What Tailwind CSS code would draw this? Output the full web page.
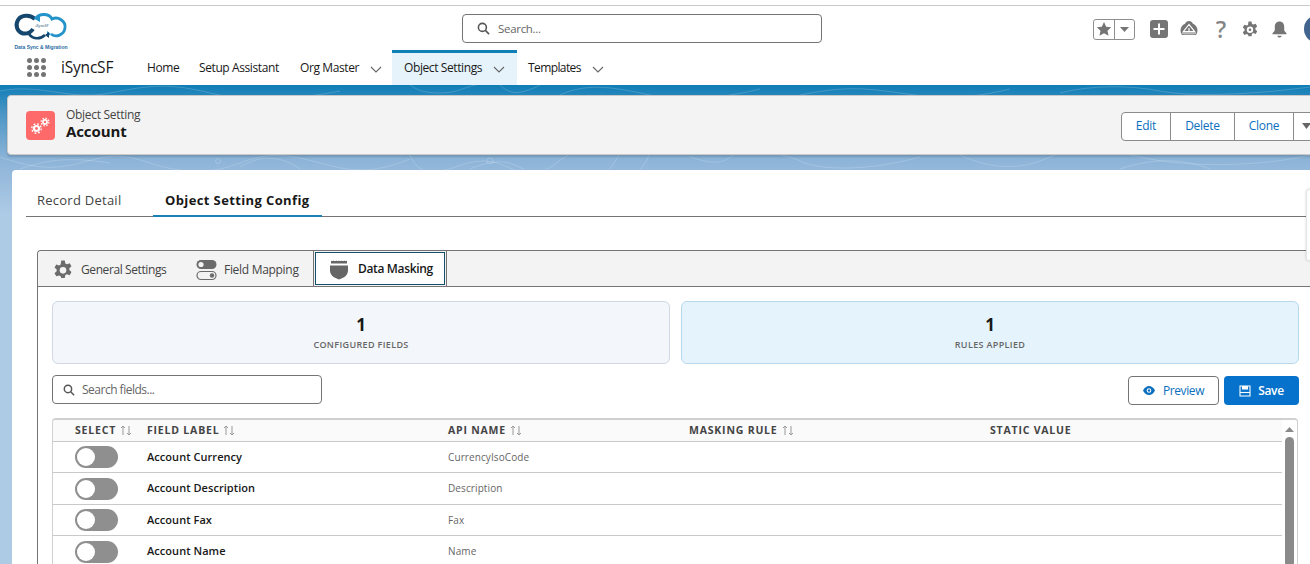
<!DOCTYPE html>
<html lang="en">
<head>
<meta charset="UTF-8">
<title>Object Setting - Account</title>
<script src="https://cdn.jsdelivr.net/npm/@tailwindcss/browser@4"></script>
</head>
<body class="m-0 bg-white">
<div class="relative w-[1310px] h-[564px] overflow-hidden bg-white font-['Open_Sans',sans-serif] text-[#181818]">

  <!-- global header -->
  <div class="h-[6px] border-b border-[#c9c9c9]"></div>
  <div class="flex h-[44px] items-start">
    <div class="w-[462px] pl-[13px] pt-[4px] shrink-0">
      <svg width="58" height="40" viewBox="0 0 58 40">
        <path d="M22 9 C17 4 8 5 5 10 C2 15 4 22 10 23.500 C14 24 18 22 20 19" fill="none" stroke="#14466e" stroke-width="4"/>
        <path d="M16 24 C20 30 28 29 32 25" fill="none" stroke="#14466e" stroke-width="2.600"/>
        <path d="M22 9 C26 3 36 3 39 9 C45 6 53 11 52 18 C51 25 43 28 38 24" fill="none" stroke="#2393c9" stroke-width="2.800"/>
        <path d="M38 24 l-4 -3 l0 6z" fill="#2393c9"/>
        <path d="M32 25 l4 -3 l0 6z" fill="#14466e"/>
        <path d="M22 9 l5 -3 l0 6z" fill="#2393c9"/>
        <text x="29" y="17" font-size="4" font-style="italic" text-anchor="middle" fill="#14466e">iSyncSF</text>
        <text x="28" y="39" font-size="5" font-weight="700" text-anchor="middle" fill="#2b6ca3" font-family="'Liberation Sans',sans-serif">Data Sync &amp; Migration</text>
      </svg>
    </div>
    <div class="mt-[8px] flex h-[29px] w-[360px] shrink-0 items-center gap-[8px] rounded-[4px] border border-[#747474] pl-[14px] bg-white">
      <svg width="13" height="13" viewBox="0 0 14 14" fill="none" stroke="#555" stroke-width="1.7"><circle cx="5.8" cy="5.8" r="4.3"/><path d="M9 9l4 4"/></svg>
      <span class="text-[11.500px] text-[#666] tracking-[-0.3px]">Search...</span>
    </div>
    <div class="ml-[271px] mt-[9px] flex shrink-0 items-center">
      <div class="flex h-[21px] w-[42px] rounded-[3px] border border-[#8e8e8e]">
        <div class="flex w-[21px] items-center justify-center border-r border-[#8e8e8e]">
          <svg width="16" height="16" viewBox="0 0 16 16" fill="#757575"><path d="M8 1l2.200 4.700 5 .6-3.700 3.400 1 5L8 12.200 3.500 14.700l1-5L.8 6.300l5-.6z"/></svg>
        </div>
        <div class="flex flex-1 items-center justify-center">
          <svg width="9" height="5" viewBox="0 0 9 5" fill="#757575"><path d="M0 0h9L4.500 5z"/></svg>
        </div>
      </div>
      <svg class="ml-[15px]" width="18" height="18" viewBox="0 0 18 18"><rect width="18" height="18" rx="3" fill="#757575"/><path d="M9 3.500v11M3.500 9h11" stroke="#fff" stroke-width="2"/></svg>
      <svg class="ml-[12px]" width="18" height="18" viewBox="0 0 18 18" fill="#757575"><path d="M9 1c2 0 3.200 1.300 4 2.800 2.500.9 4.500 3.400 4.500 6.700 0 1.500-.5 3-1.500 4.500L14 14.700H4L2 15C1 13.500.5 12 .5 10.500.5 7.200 2.500 4.700 5 3.800 5.800 2.300 7 1 9 1z"/><path d="M9 4.500L3.500 11.500h11zM9 8v3.500M2 13h14" fill="none" stroke="#fff" stroke-width="1.200"/></svg>
      <span class="ml-[16px] w-[14px] text-center text-[23px] leading-[20px] font-semibold text-[#858585]">?</span>
      <svg class="ml-[14px]" width="16" height="17" viewBox="0 0 16 17" fill="#757575"><path d="M6.500 0h3l.5 2.400 1.300.7L13.700 2.300l1.500 2.600-1.800 1.700v1.500l1.800 1.700-1.500 2.600-2.400-.8-1.300.7-.5 2.400h-3L6 13.300l-1.300-.7-2.400.8L.8 10.800l1.800-1.700V7.600L.8 5.900l1.500-2.600 2.400.8L6 3.400z" transform="translate(0 .5)"/><circle cx="8" cy="8.800" r="3.200" fill="#fff"/><circle cx="8" cy="8.800" r="1.300" fill="#757575"/></svg>
      <svg class="ml-[13px]" width="17" height="17" viewBox="0 0 17 17" fill="#757575"><path d="M8.500 0.500c3 0 4.700 2.200 4.700 5v3.300c0 1.300 1.100 2.200 2.300 3.400v1.100H1.500v-1.100c1.200-1.200 2.300-2.100 2.300-3.400V5.500c0-2.800 1.700-5 4.700-5z"/><path d="M6.300 14.700h4.400c-.2 1.100-1.100 1.800-2.200 1.800s-2-.7-2.200-1.800z"/></svg>
      <div class="ml-[16px] h-[28px] w-[28px] shrink-0 rounded-full bg-[#41658f]"></div>
    </div>
  </div>

  <!-- app nav -->
  <div class="flex h-[35px] items-stretch">
    <div class="flex w-[147px] items-center pl-[27px] shrink-0">
      <div class="grid grid-cols-3 gap-[2px]">
        <i class="h-[5px] w-[5px] rounded-full bg-[#747474]"></i><i class="h-[5px] w-[5px] rounded-full bg-[#747474]"></i><i class="h-[5px] w-[5px] rounded-full bg-[#747474]"></i>
        <i class="h-[5px] w-[5px] rounded-full bg-[#747474]"></i><i class="h-[5px] w-[5px] rounded-full bg-[#747474]"></i><i class="h-[5px] w-[5px] rounded-full bg-[#747474]"></i>
        <i class="h-[5px] w-[5px] rounded-full bg-[#747474]"></i><i class="h-[5px] w-[5px] rounded-full bg-[#747474]"></i><i class="h-[5px] w-[5px] rounded-full bg-[#747474]"></i>
      </div>
      <span class="ml-[15px] text-[15.500px] tracking-[-0.2px]">iSyncSF</span>
    </div>
    <div class="flex w-[52px] items-center text-[12px] tracking-[-0.4px]">Home</div>
    <div class="flex w-[101px] items-center text-[12px] tracking-[-0.4px]">Setup Assistant</div>
    <div class="flex w-[92px] items-center text-[12px] tracking-[-0.4px]">Org Master
      <svg class="ml-[11px] mt-[4px]" width="12" height="7" viewBox="0 0 12 7" fill="none" stroke="#666" stroke-width="1.100"><path d="M1 1l5 5 5-5"/></svg>
    </div>
    <div class="flex w-[125px] items-center border-t-[3px] border-[#0f7fb6] bg-[#e6f3fb] pl-[12px] pb-[3px] text-[12px] tracking-[-0.4px]">Object Settings
      <svg class="ml-[11px] mt-[4px]" width="12" height="7" viewBox="0 0 12 7" fill="none" stroke="#666" stroke-width="1.100"><path d="M1 1l5 5 5-5"/></svg>
    </div>
    <div class="flex items-center pl-[11px] text-[12px] tracking-[-0.6px]">Templates
      <svg class="ml-[11px] mt-[4px]" width="12" height="7" viewBox="0 0 12 7" fill="none" stroke="#666" stroke-width="1.100"><path d="M1 1l5 5 5-5"/></svg>
    </div>
  </div>

  <!-- page band -->
  <div class="relative h-[479px] bg-[linear-gradient(180deg,#0f7db6_0px,#4e97c6_30px,#8db4d8_75px,#aecbe6_130px)] pl-[7px] pt-[10px]">
    <!-- contour pattern behind the cards -->
    <svg class="absolute left-0 top-0" width="1310" height="90" viewBox="0 0 1310 90" fill="none" stroke="#fff" stroke-opacity="0.22" stroke-width="0.8">
      <path d="M0 6c40-8 70 10 110 2s60-10 100 0 90 6 130-2M410 0c6 4 12 8 30 8s24-6 36-8M500 0c10 10 20 10 40 0M560 10c30-14 60-6 90 0s70 4 110-6M800 10c40-8 60-8 100-2s70 6 110-4M1060 8c30-8 70-8 100-2s90 4 150-4"/>
      <path d="M0 72c30 10 50 14 80 6s40-10 70 0 60 12 90 0 50-8 80 0 50 12 90-4M410 70c6 14 14 18 30 16s24-10 44-10 30 14 50 12 24-16 40-20M620 68c-6 10-8 14-14 20M650 68c-4 10-8 14-12 20M690 72c20 6 30 8 40 0s50-6 70 4 70 10 120-4M960 70c30 14 60 16 90 2s60-6 100 2 110 8 160-4"/>
      <path d="M20 84c30-10 50-12 90-6M470 84c30-12 40-8 60 4M240 82c20-12 40-12 60 2M1120 84c30-10 60-12 90 0"/>
      <circle cx="490" cy="76" r="3"/><circle cx="218" cy="76" r="2.500"/>
    </svg>

    <div class="relative flex h-[60px] w-[1320px] items-center rounded-[4px] border border-[#c9c9c9] bg-[#f3f3f3] pl-[18px] shadow-[0_2px_2px_rgba(0,0,0,0.15)]">
      <div class="flex h-[29px] w-[29px] items-center justify-center rounded-[4px] bg-[#fe6a6a]">
        <svg width="21" height="19" viewBox="0 0 21 19" fill="#fff">
          <g><circle cx="6.500" cy="12.500" r="3.600"/><circle cx="6.500" cy="12.500" r="4.700" fill="none" stroke="#fff" stroke-width="1.400" stroke-dasharray="1.800 1.900"/><circle cx="6.500" cy="12.500" r="1.400" fill="#fe6a6a"/></g>
          <g><circle cx="15" cy="6" r="2.900"/><circle cx="15" cy="6" r="3.900" fill="none" stroke="#fff" stroke-width="1.200" stroke-dasharray="1.500 1.560"/><circle cx="15" cy="6" r="1.200" fill="#fe6a6a"/></g>
        </svg>
      </div>
      <div class="ml-[11px] mb-[5px] flex flex-col whitespace-nowrap">
        <span class="text-[12px] leading-[16px] text-[#444] tracking-[-0.3px]">Object Setting</span>
        <span class="text-[15px] leading-[16px] font-bold tracking-[-0.1px]">Account</span>
      </div>
      <div class="ml-auto mr-[1px] mt-[2px] flex h-[29px] rounded-[4px] border border-[#8b8b8b] bg-white text-[12px] text-[#0b6fc0] tracking-[-0.25px]">
        <div class="flex w-[49px] items-center justify-center border-r border-[#8b8b8b]">Edit</div>
        <div class="flex w-[64px] items-center justify-center border-r border-[#8b8b8b]">Delete</div>
        <div class="flex w-[59px] items-center justify-center border-r border-[#8b8b8b]">Clone</div>
        <div class="flex w-[30px] items-center pl-[8px]">
          <svg width="9" height="6" viewBox="0 0 9 6" fill="#666"><path d="M0 0h9L4.500 6z"/></svg>
        </div>
      </div>
    </div>

    <!-- main card -->
    <div class="relative ml-[5px] mt-[15px] h-[400px] w-[1310px] rounded-tl-[4px] bg-white pl-[14px] pt-[17px]">
      <div class="flex h-[30px] w-[1280px] border-b border-[#747474] text-[13px]">
        <div class="w-[127px] pl-[11px] pt-[4px] tracking-[0.25px] text-[#444]">Record Detail</div>
        <div class="h-[30px] w-[169px] border-b-2 border-[#1b7fb8] pl-[12px] pt-[4px] font-bold tracking-[0.38px] whitespace-nowrap">Object Setting Config</div>
      </div>

      <!-- inner tabset -->
      <div class="ml-[11px] mt-[33px] w-[1290px] rounded-tl-[4px] border-l border-t border-[#747474]">
        <div class="flex h-[36px] items-stretch border-b border-[#747474] bg-[#f3f3f3] rounded-tl-[4px]">
          <div class="flex w-[143px] items-center pl-[15px] pt-[2px] text-[12px] tracking-[-0.4px] text-[#444]">
            <svg width="20" height="20" viewBox="0 0 16 17" fill="#6b6b6b"><path d="M6.500 0h3l.5 2.400 1.300.7L13.700 2.300l1.500 2.600-1.800 1.700v1.500l1.800 1.700-1.500 2.600-2.400-.8-1.300.7-.5 2.400h-3L6 13.300l-1.300-.7-2.400.8L.8 10.800l1.800-1.700V7.600L.8 5.900l1.500-2.600 2.400.8L6 3.400z" transform="translate(0 .5)"/><circle cx="8" cy="8.800" r="2.800" fill="#f3f3f3"/></svg>
            <span class="ml-[8px]">General Settings</span>
          </div>
          <div class="flex w-[132px] items-center pl-[15px] pt-[2px] text-[12px] tracking-[-0.3px] text-[#444]">
            <svg width="21" height="22" viewBox="0 0 21 22"><rect x="0.500" y="1" width="20" height="9" rx="4.500" fill="#6b6b6b"/><circle cx="5" cy="5.500" r="2.600" fill="#f3f3f3"/><rect x="1" y="12.500" width="19" height="8" rx="4" fill="none" stroke="#6b6b6b" stroke-width="1.200"/><circle cx="16" cy="16.500" r="2.200" fill="#6b6b6b"/></svg>
            <span class="ml-[7px]">Field Mapping</span>
          </div>
          <div class="flex border-l border-r border-[#747474]">
            <div class="m-[1px] flex w-[130px] items-center border border-[#14506e] bg-white pl-[13px] pt-[1px] text-[12px] font-semibold tracking-[-0.35px]">
              <svg width="20" height="21" viewBox="0 0 20 21" fill="#666"><path d="M2 1.500c.8.700 1.700.7 2.500 0 .9.800 2 .8 2.800 0 .9.800 1.800.8 2.700 0 .9.800 1.800.8 2.700 0 .8.800 1.900.8 2.800 0 .8.700 1.700.7 2.500 0v3H2z"/><path d="M1 6.500h18v5c0 4.500-4 7.500-9 9-5-1.500-9-4.500-9-9z"/></svg>
              <span class="ml-[9px]">Data Masking</span>
            </div>
          </div>
        </div>

        <div class="pl-[14px] pt-[14px]">
          <div class="flex gap-[11px]">
            <div class="flex h-[63px] w-[618px] flex-col items-center justify-center rounded-[6px] border border-[#cfd8e3] bg-[#f3f6fa]">
              <span class="text-[17px] leading-[22px] font-bold">1</span>
              <span class="mt-[2px] text-[9px] leading-[13px] font-semibold tracking-[0.35px] text-[#666]">CONFIGURED FIELDS</span>
            </div>
            <div class="flex h-[63px] w-[618px] flex-col items-center justify-center rounded-[6px] border border-[#b9d8ee] bg-[#e5f3fc]">
              <span class="text-[17px] leading-[22px] font-bold">1</span>
              <span class="mt-[2px] text-[9px] leading-[13px] font-semibold tracking-[0.35px] text-[#666]">RULES APPLIED</span>
            </div>
          </div>

          <div class="mt-[11px] flex w-[1247px] items-start">
            <div class="flex h-[29px] w-[270px] items-center gap-[7px] rounded-[4px] border border-[#747474] pl-[10px]">
              <svg width="12" height="12" viewBox="0 0 14 14" fill="none" stroke="#555" stroke-width="1.700"><circle cx="5.800" cy="5.800" r="4.300"/><path d="M9 9l4 4"/></svg>
              <span class="text-[12px] text-[#666] tracking-[-0.5px]">Search fields...</span>
            </div>
            <div class="ml-auto mt-[1px] flex gap-[5px]">
              <div class="flex h-[29px] w-[91px] items-center justify-center gap-[8px] rounded-[4px] border border-[#747474] text-[12px] text-[#0b6fc0] tracking-[-0.4px]">
                <svg width="12" height="9" viewBox="0 0 12 9"><path d="M0 4.500C1.500 1.500 3.700 0 6 0s4.500 1.500 6 4.500C10.500 7.500 8.300 9 6 9S1.500 7.500 0 4.500z" fill="#0b6fc0"/><circle cx="6" cy="4.500" r="2.300" fill="#fff"/><circle cx="6" cy="4.500" r="1.200" fill="#0b6fc0"/></svg>
                Preview
              </div>
              <div class="flex h-[29px] w-[75px] items-center justify-center gap-[7px] rounded-[4px] bg-[#0672cb] text-[12px] font-semibold text-white tracking-[-0.3px]">
                <svg width="12" height="12" viewBox="0 0 12 12" fill="none" stroke="#fff" stroke-width="1.100"><path d="M1 1h10v10H1z"/><path d="M3.500 1v3h5V1" fill="#fff"/><path d="M1 7.500h10"/></svg>
                Save
              </div>
            </div>
          </div>

          <!-- fields table -->
          <div class="relative mt-[13px] h-[160px] w-[1246px] overflow-hidden rounded-t-[4px] border-x border-t-2 border-[#d0d0d0] border-b-0">
            <div class="w-[1231px] text-[11px]">
              <div class="flex h-[22px] items-center border-b border-[#c9c9c9] bg-[#fafafa] text-[10.500px] font-bold tracking-[0.8px] text-[#444]">
                <div class="flex w-[94px] items-center pl-[22px]">SELECT
                  <svg class="ml-[4px]" width="12" height="11" viewBox="0 0 12 11" fill="none" stroke="#999" stroke-width="1"><path d="M3 10V1M1 3l2-2 2 2M9 1v9M7 8l2 2 2-2"/></svg>
                </div>
                <div class="flex w-[301px] items-center">FIELD LABEL
                  <svg class="ml-[4px]" width="12" height="11" viewBox="0 0 12 11" fill="none" stroke="#999" stroke-width="1"><path d="M3 10V1M1 3l2-2 2 2M9 1v9M7 8l2 2 2-2"/></svg>
                </div>
                <div class="flex w-[241px] items-center">API NAME
                  <svg class="ml-[4px]" width="12" height="11" viewBox="0 0 12 11" fill="none" stroke="#999" stroke-width="1"><path d="M3 10V1M1 3l2-2 2 2M9 1v9M7 8l2 2 2-2"/></svg>
                </div>
                <div class="flex w-[301px] items-center">MASKING RULE
                  <svg class="ml-[4px]" width="12" height="11" viewBox="0 0 12 11" fill="none" stroke="#999" stroke-width="1"><path d="M3 10V1M1 3l2-2 2 2M9 1v9M7 8l2 2 2-2"/></svg>
                </div>
                <div>STATIC VALUE</div>
              </div>

              <div class="flex h-[31px] items-center border-b border-[#c9c9c9]">
                <div class="w-[94px] pl-[22px]"><div class="h-[22px] w-[43px] rounded-full bg-[#8f8f8f] p-[2px]"><div class="h-[18px] w-[18px] rounded-full bg-white"></div></div></div>
                <div class="w-[301px] font-semibold tracking-[0.05px]">Account Currency</div>
                <div class="text-[10px] text-[#666] tracking-[0.1px]">CurrencyIsoCode</div>
              </div>
              <div class="flex h-[32px] items-center border-b border-[#c9c9c9]">
                <div class="w-[94px] pl-[22px]"><div class="h-[22px] w-[43px] rounded-full bg-[#8f8f8f] p-[2px]"><div class="h-[18px] w-[18px] rounded-full bg-white"></div></div></div>
                <div class="w-[301px] font-semibold tracking-[0.05px]">Account Description</div>
                <div class="text-[10px] text-[#666] tracking-[0.1px]">Description</div>
              </div>
              <div class="flex h-[31px] items-center border-b border-[#c9c9c9]">
                <div class="w-[94px] pl-[22px]"><div class="h-[22px] w-[43px] rounded-full bg-[#8f8f8f] p-[2px]"><div class="h-[18px] w-[18px] rounded-full bg-white"></div></div></div>
                <div class="w-[301px] font-semibold tracking-[0.05px]">Account Fax</div>
                <div class="text-[10px] text-[#666] tracking-[0.1px]">Fax</div>
              </div>
              <div class="flex h-[31px] items-center">
                <div class="w-[94px] pl-[22px]"><div class="h-[22px] w-[43px] rounded-full bg-[#8f8f8f] p-[2px]"><div class="h-[18px] w-[18px] rounded-full bg-white"></div></div></div>
                <div class="w-[301px] font-semibold tracking-[0.05px]">Account Name</div>
                <div class="text-[10px] text-[#666] tracking-[0.1px]">Name</div>
              </div>
            </div>
            <!-- scrollbar -->
            <div class="absolute right-0 top-0 flex h-full w-[15px] flex-col items-center bg-white">
              <svg class="mt-[7px]" width="9" height="5" viewBox="0 0 9 5" fill="#8a8a8a"><path d="M4.500 0L9 5H0z"/></svg>
              <div class="mt-[5px] h-[130px] w-[9px] rounded-full bg-[#8a8a8a]"></div>
            </div>
          </div>
        </div>
      </div>
    </div>
  </div>

  <!-- clipped popover at right edge -->
  <div class="absolute left-[1306px] top-[189px] h-[72px] w-[20px] rounded-l-[3px] border border-[#e5e5e5] bg-white shadow-[0_0_3px_rgba(0,0,0,0.15)]"></div>
</div>
</body>
</html>
